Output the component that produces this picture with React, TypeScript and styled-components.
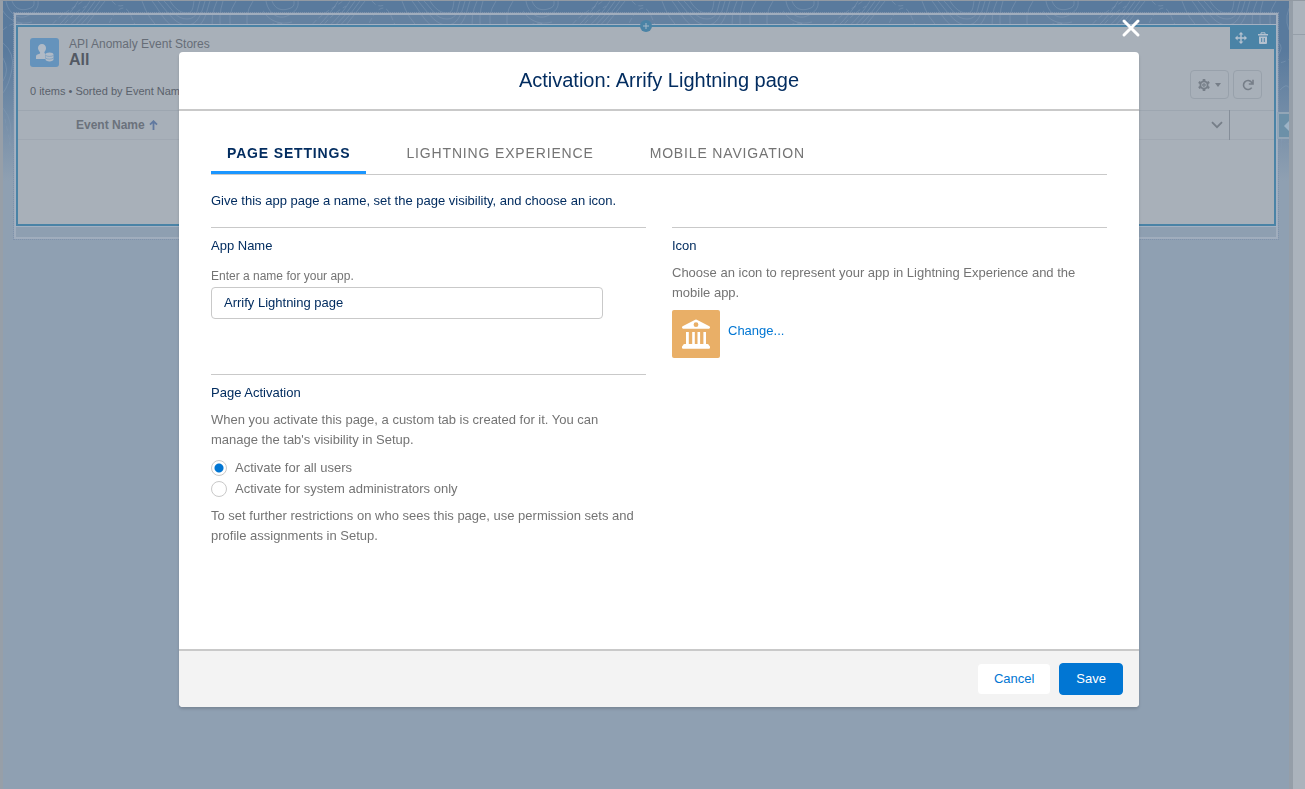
import React, { useState } from "react";
import styled, { createGlobalStyle } from "styled-components";

const GlobalStyle = createGlobalStyle`
  *, *::before, *::after { box-sizing: border-box; }
  body {
    margin: 0;
    font-family: "Liberation Sans", Arial, sans-serif;
    font-size: 13px;
    line-height: 20px;
    color: #032d60;
  }
  button, input { font: inherit; }
  h1, h2, p, fieldset { margin: 0; padding: 0; border: 0; font-weight: 400; }
`;

/* ---------- Page builder behind the dialog ---------- */

const Builder = styled.div`
  display: flex;
  min-height: 100vh;
  border-top: 1px solid #929aa3;
  border-left: 3px solid #979fa8;
`;

const Canvas = styled.main`
  position: relative;
  flex: 1;
  min-width: 0;
  padding: 11px 10px;
  background: linear-gradient(#597a9d 0, #597a9d 50px, #8fa0b2 180px);
`;

const Topography = styled.svg`
  position: absolute;
  top: 0;
  left: 0;
  width: 100%;
  height: 180px;
  fill: none;
  stroke: #8da3bb;
  stroke-opacity: 0.4;
`;

const SidePanel = styled.aside`
  width: 16px;
  border-left: 4px solid #959ea8;
  background: #abb3bc;
`;

const SidePanelTop = styled.div`
  height: 34px;
  border-bottom: 1px solid #969fa9;
`;

const Region = styled.div`
  position: relative;
  border: 1px dotted #7f92ac;
  background: rgba(139, 154, 177, 0.25);
`;

const RegionInner = styled.div`
  border: 2px solid #a0adbd;
  padding: 10px 0 11px;
`;

const ListCard = styled.section`
  position: relative;
  min-height: 201px;
  border: 2px solid #4a83a6;
  outline: 1px solid #a4b1c2;
  background: #a8b0b9;
  color: #666d77;
  font-size: 11px;
  line-height: 16px;
`;

const AddBadge = styled.button`
  position: absolute;
  top: -7px;
  left: 50%;
  width: 12px;
  height: 12px;
  margin-left: -6px;
  padding: 0;
  border: 0;
  border-radius: 50%;
  background: #4a83a6;
`;

const CardTools = styled.div`
  position: absolute;
  top: 0;
  right: 0;
  display: flex;
  align-items: center;
  height: 22px;
  background: #4a83a6;
`;

const ToolButton = styled.button`
  display: flex;
  justify-content: center;
  align-items: center;
  width: 22px;
  height: 20px;
  padding: 0;
  border: 0;
  background: none;
`;

const CardHeader = styled.header`
  display: flex;
  align-items: center;
  gap: 10px;
  padding: 10px 12px 0;
`;

const CardTitles = styled.div`
  line-height: 15px;
`;

const CardKind = styled.p`
  font-size: 12px;
`;

const CardName = styled.h2`
  color: #535963;
  font-size: 16px;
  font-weight: 700;
`;

const CardStatus = styled.div`
  display: flex;
  justify-content: space-between;
  align-items: center;
  height: 43px;
  padding: 0 12px;
`;

const StatusText = styled.p`
  padding-top: 4px;
  color: #5a616b;
`;

const ListActions = styled.div`
  display: flex;
  gap: 4px;
  padding-bottom: 8px;
`;

const ListButton = styled.button<{ $wide?: boolean }>`
  display: flex;
  justify-content: center;
  align-items: center;
  gap: 5px;
  width: ${(p) => (p.$wide ? 39 : 29)}px;
  height: 29px;
  padding: 0;
  border: 1px solid #98a1ab;
  border-radius: 4px;
  background: none;
`;

const ListTable = styled.table`
  width: 100%;
  border-collapse: collapse;
  border-top: 1px solid #9da6b0;
  border-bottom: 1px solid #a0a8b2;
`;

const HeaderCell = styled.th<{ $width?: number }>`
  width: ${(p) => (p.$width ? `${p.$width}px` : "auto")};
  height: 29px;
  padding: 0 6px 0 0;
  border-right: ${(p) => (p.$width ? "0" : "1px solid #858e99")};
  color: #6b727c;
  font-size: 12px;
  text-align: left;
`;

const HeaderContent = styled.div`
  display: flex;
  align-items: center;
  gap: 4px;
  padding-left: 58px;

  svg:last-child { margin-left: auto; }
`;

const PanelHandle = styled.button`
  position: absolute;
  top: 111px;
  right: 0;
  display: flex;
  align-items: center;
  justify-content: flex-end;
  width: 12px;
  height: 27px;
  padding: 0;
  border: 2px solid #93a6b7;
  border-right: 0;
  background: #6c90a8;
`;

/* ---------- Dialog ---------- */

const Overlay = styled.div`
  position: fixed;
  inset: 0;
  display: flex;
  justify-content: center;
  padding: 52px 0 82px 13px;
`;

const Dialog = styled.div`
  position: relative;
  display: flex;
  flex-direction: column;
  width: 100%;
  max-width: 960px;
  border-radius: 4px;
  background: #fff;
  box-shadow: 0 2px 3px rgba(0, 0, 0, 0.16);
`;

const CloseButton = styled.button`
  position: absolute;
  top: -34px;
  right: -2px;
  width: 20px;
  height: 20px;
  padding: 0;
  border: 0;
  background: none;

  svg { display: block; }
`;

const DialogHeader = styled.header`
  padding: 16px;
  border-bottom: 2px solid #c9c9c9;
  text-align: center;
`;

const DialogTitle = styled.h1`
  font-size: 20px;
  line-height: 25px;
`;

const DialogBody = styled.div`
  flex: 1;
  min-height: 0;
  overflow: auto;
  padding: 21px 32px;
`;

const TabList = styled.div`
  display: flex;
  gap: 24px;
  border-bottom: 1px solid #c9c9c9;
`;

const Tab = styled.button<{ $active: boolean }>`
  height: 42px;
  padding: 2px 16px 0;
  border: 0;
  border-bottom: 3px solid ${(p) => (p.$active ? "#1b96ff" : "transparent")};
  background: none;
  color: ${(p) => (p.$active ? "#032d60" : "#747474")};
  font-size: 14px;
  font-weight: ${(p) => (p.$active ? 700 : 400)};
  letter-spacing: 0.06em;
  text-transform: uppercase;
`;

const Intro = styled.p`
  padding: 16px 0;
`;

const Columns = styled.div`
  display: grid;
  grid-template-columns: 1fr 1fr;
  gap: 0 26px;
`;

const Section = styled.section<{ $tall?: boolean }>`
  min-height: ${(p) => (p.$tall ? 147 : 0)}px;
  padding-top: 8px;
  border-top: 1px solid #c9c9c9;
`;

const SectionTitle = styled.h2`
  margin-bottom: 7px;
  font-size: 13px;
`;

const Hint = styled.p`
  color: #747474;
`;

const FieldLabel = styled.label`
  display: block;
  padding: 3px 0 1px;
  color: #747474;
  font-size: 12px;
`;

const TextField = styled.input`
  display: block;
  width: 90%;
  height: 32px;
  padding: 0 12px 2px;
  border: 1px solid #c9c9c9;
  border-radius: 4px;
  background: #fff;
  color: #032d60;
`;

const Choices = styled.fieldset`
  display: grid;
  gap: 1px;
  margin: 8px 0 7px;
`;

const Choice = styled.label`
  display: flex;
  align-items: center;
  gap: 8px;
  color: #747474;
`;

const Radio = styled.input`
  appearance: none;
  width: 16px;
  height: 16px;
  margin: 0;
  border: 1px solid #c9c9c9;
  border-radius: 50%;
  background: #fff;

  &:checked { background: radial-gradient(circle, #0176d3 4px, #fff 5px); }
`;

const IconPicker = styled.div`
  display: flex;
  gap: 8px;
  padding-top: 7px;
`;

const ChangeLink = styled.a`
  padding-top: 11px;
  color: #0176d3;
  text-decoration: none;
`;

const DialogFooter = styled.footer`
  display: flex;
  justify-content: flex-end;
  align-items: center;
  gap: 8px;
  padding: 12px 16px;
  border-top: 2px solid #c9c9c9;
  border-radius: 0 0 4px 4px;
  background: #f3f3f3;
`;

const FooterButton = styled.button<{ $primary?: boolean }>`
  height: 32px;
  padding: 0 16px;
  border: 1px solid ${(p) => (p.$primary ? "#0176d3" : "#f3f3f3")};
  border-radius: 4px;
  background: ${(p) => (p.$primary ? "#0176d3" : "#fff")};
  color: ${(p) => (p.$primary ? "#fff" : "#0176d3")};
`;

/* ---------- Drawings ---------- */

const ContourLines = () => (
  <Topography aria-hidden="true">
    <defs>
      <linearGradient id="fade" x1="0" y1="0" x2="0" y2="1">
        <stop offset="0.5" stopColor="#fff" />
        <stop offset="1" stopColor="#000" />
      </linearGradient>
      <mask id="fadeMask">
        <rect width="100%" height="100%" fill="url(#fade)" />
      </mask>
      <pattern id="contours" width="260" height="180" patternUnits="userSpaceOnUse">
        <path d="M3 0C5 12 15 19 24 15S36 6 35 0M9 0C12 8 18 10 25 8S31 3 31 0M-3 5C3 17 13 25 29 21" />
        <path strokeDasharray="5 3" d="M0 29C10 19 24 21 30 29M45 29C54 15 69 8 80 0M57 29Q66 15 83 5M103 29Q110 12 117 8T129 17 138 29M109 0Q115 8 123 3" />
        <path d="M51 29Q68 13 75 0M62 29Q78 15 87 0M68 29Q83 15 92 0M73 29Q87 15 97 0M79 29Q92 13 102 0" />
        <path d="M149 0C158 11 164 29 183 29S203 11 207 0M155 0C164 10 172 24 184 24S199 10 202 0M161 0C170 9 173 18 184 18S194 8 197 0M167 0C173 9 178 12 184 12S190 6 191 0M139 0Q145 18 158 29" />
        <path d="M214 0Q207 15 210 29M220 0Q215 15 218 29M233 0Q223 15 229 29M246 29Q240 15 250 0" />
        <path d="M0 42Q12 52 9 68T0 92M0 57Q7 69 0 80M0 107Q12 121 6 145M231 39Q241 43 237 51T228 55M237 89Q250 75 247 107T252 145M225 112Q242 121 238 148" />
        <path strokeDasharray="5 3" d="M222 60Q242 67 255 50M223 132Q235 135 258 151M2 118Q5 134 11 158" />
      </pattern>
    </defs>
    <rect width="100%" height="180" fill="url(#contours)" stroke="none" mask="url(#fadeMask)" />
  </Topography>
);

const EventStoreIcon = () => (
  <svg width="29" height="29" viewBox="0 0 29 29" aria-hidden="true">
    <rect width="29" height="29" rx="3" fill="#6593bc" />
    <path fill="#b0bac6" d="M12 6c2.400 0 4 1.800 4 4 0 1.700-.7 2.700-1.500 4-.4 1 .2 1.500 1.300 2-.8 1.200-.8 3.500-.2 5H6v-2.500c0-1 .6-1.500 1.500-1.900l2-.9c.8-.5.800-1 .3-1.800C8.800 12.500 8 11.500 8 10c0-2.200 1.500-4 4-4z" />
    <path fill="#b0bac6" d="M19.500 14.500c2.300 0 4 .8 4 1.900v5.200c0 1.100-1.700 1.900-4 1.900s-4-.8-4-1.900v-5.200c0-1.100 1.700-1.900 4-1.900z" />
    <path fill="none" stroke="#6593bc" strokeWidth=".6" d="M15.500 17.300c1.500 1.500 6.500 1.500 8 0M15.500 20c1.500 1.500 6.500 1.500 8 0" />
  </svg>
);

const MoveIcon = () => (
  <svg width="12" height="12" viewBox="0 0 12 12" fill="#b4c1cf" aria-hidden="true">
    <path d="M6 0l2.400 2.600H6.700v2.700h2.700V3.600L12 6 9.400 8.400V6.700H6.700v2.700h1.700L6 12 3.600 9.400h1.700V6.700H2.600v1.700L0 6l2.600-2.400v1.700h2.700V2.600H3.600z" />
  </svg>
);

const TrashIcon = () => (
  <svg width="10" height="12" viewBox="0 0 10 12" aria-hidden="true">
    <path fill="none" stroke="#b4c1cf" d="M3 2.500V.8h4v1.700" />
    <path fill="#b4c1cf" d="M0 2h10v1.500H0zM1 4.500h8V11q0 1-1 1H2q-1 0-1-1z" />
    <path stroke="#4a83a6" d="M3.700 6v4M6.300 6v4" />
  </svg>
);

const GearIcon = () => (
  <svg width="12" height="12" viewBox="0 0 12 12" fill="none" stroke="#767e88" aria-hidden="true">
    <circle cx="6" cy="6" r="3.600" strokeWidth="1.800" />
    <circle cx="6" cy="6" r="1.200" strokeWidth="1.200" />
    <path strokeWidth="2.600" d="M6 0v2M6 10v2M.8 3l1.700 1M9.500 8l1.700 1M.8 9l1.700-1M9.500 4l1.700-1" />
  </svg>
);

const RefreshIcon = () => (
  <svg width="12" height="12" viewBox="0 0 12 12" fill="none" stroke="#767e88" strokeWidth="1.600" aria-hidden="true">
    <path d="M9.700 8.600A4.500 4.500 0 1 1 9.500 3.200L10.800 4.600M11 .8v4.200H6.800" />
  </svg>
);

const BankIcon = () => (
  <svg width="48" height="48" viewBox="0 0 48 48" aria-hidden="true">
    <rect width="48" height="48" rx="2" fill="#e9af67" />
    <path
      fill="#fff"
      fillRule="evenodd"
      d="M23.200 9.800q.8-.4 1.600 0l12.600 6.400q.6.400.6 1v.4q0 1.100-1.100 1.100H11.100Q10 18.700 10 17.600v-.4q0-.6.6-1zM24 12.300a2.400 2.400 0 1 0 0 4.800 2.400 2.400 0 0 0 0-4.800z"
    />
    <path fill="#fff" d="M14 22h2.800v12h3.400V22h2.600v12h2.700V22h2.600v12h3.300V22H34v12h1.500q1.500 0 1.500 1.500 1 .4 1 1.500v.7q0 1.100-1.100 1.100H11.100Q10 38.800 10 37.700V37q0-1.100 1-1.500 0-1.500 1.500-1.500H14z" />
  </svg>
);

const TABS = ["Page Settings", "Lightning Experience", "Mobile Navigation"];

const PageBuilder = () => (
  <Builder>
    <Canvas>
      <ContourLines />
      <Region>
        <RegionInner>
          <ListCard>
            <CardHeader>
              <EventStoreIcon />
              <CardTitles>
                <CardKind>API Anomaly Event Stores</CardKind>
                <CardName>All</CardName>
              </CardTitles>
            </CardHeader>
            <CardStatus>
              <StatusText>0 items • Sorted by Event Name</StatusText>
              <ListActions>
                <ListButton $wide aria-label="List view controls">
                  <GearIcon />
                  <svg width="6" height="4" viewBox="0 0 6 4" fill="#767e88" aria-hidden="true">
                    <path d="M0 0h6L3 4z" />
                  </svg>
                </ListButton>
                <ListButton aria-label="Refresh">
                  <RefreshIcon />
                </ListButton>
              </ListActions>
            </CardStatus>
            <ListTable>
              <thead>
                <tr>
                  <HeaderCell scope="col">
                    <HeaderContent>
                      Event Name
                      <svg width="9" height="10" viewBox="0 0 9 10" fill="none" stroke="#6179a0" strokeWidth="1.800" aria-hidden="true">
                        <path d="M4.500 10V1M1 4.700l3.500-3.500L8 4.700" />
                      </svg>
                      <svg width="12" height="8" viewBox="0 0 12 8" fill="none" stroke="#767e88" strokeWidth="1.800" aria-hidden="true">
                        <path d="M1 1.200l5 5 5-5" />
                      </svg>
                    </HeaderContent>
                  </HeaderCell>
                  <HeaderCell as="td" $width={45} />
                </tr>
              </thead>
            </ListTable>
            <CardTools>
              <ToolButton aria-label="Move"><MoveIcon /></ToolButton>
              <ToolButton aria-label="Delete"><TrashIcon /></ToolButton>
            </CardTools>
            <AddBadge aria-label="Add component">
              <svg width="12" height="12" viewBox="0 0 12 12" stroke="#a4b7c8" display="block" aria-hidden="true">
                <path d="M6 3v6M3 6h6" />
              </svg>
            </AddBadge>
          </ListCard>
        </RegionInner>
      </Region>
      <PanelHandle aria-label="Collapse panel">
        <svg width="5" height="10" viewBox="0 0 5 10" fill="#9db3c6" aria-hidden="true">
          <path d="M5 0v10L0 5z" />
        </svg>
      </PanelHandle>
    </Canvas>
    <SidePanel><SidePanelTop /></SidePanel>
  </Builder>
);

export default function App() {
  const [tab, setTab] = useState(TABS[0]);
  const [name, setName] = useState("Arrify Lightning page");
  const [audience, setAudience] = useState("all");

  return (
    <>
      <GlobalStyle />
      <PageBuilder />
      <Overlay>
        <Dialog role="dialog" aria-modal="true" aria-labelledby="dialog-title">
          <CloseButton aria-label="Close">
            <svg width="20" height="20" viewBox="0 0 20 20" stroke="#fff" strokeWidth="3" strokeLinecap="round" aria-hidden="true">
              <path d="M3 3l14 14M17 3L3 17" />
            </svg>
          </CloseButton>
          <DialogHeader>
            <DialogTitle id="dialog-title">Activation: Arrify Lightning page</DialogTitle>
          </DialogHeader>
          <DialogBody>
            <TabList role="tablist">
              {TABS.map((t) => (
                <Tab key={t} role="tab" aria-selected={t === tab} $active={t === tab} onClick={() => setTab(t)}>
                  {t}
                </Tab>
              ))}
            </TabList>
            <Intro>Give this app page a name, set the page visibility, and choose an icon.</Intro>
            <Columns>
              <Section $tall>
                <SectionTitle>App Name</SectionTitle>
                <FieldLabel htmlFor="app-name">Enter a name for your app.</FieldLabel>
                <TextField id="app-name" value={name} onChange={(e) => setName(e.target.value)} />
              </Section>
              <Section>
                <SectionTitle>Icon</SectionTitle>
                <Hint>Choose an icon to represent your app in Lightning Experience and the mobile app.</Hint>
                <IconPicker>
                  <BankIcon />
                  <ChangeLink href="#icon">Change...</ChangeLink>
                </IconPicker>
              </Section>
              <Section>
                <SectionTitle>Page Activation</SectionTitle>
                <Hint>When you activate this page, a custom tab is created for it. You can manage the tab's visibility in Setup.</Hint>
                <Choices>
                  <Choice>
                    <Radio type="radio" name="audience" checked={audience === "all"} onChange={() => setAudience("all")} />
                    Activate for all users
                  </Choice>
                  <Choice>
                    <Radio type="radio" name="audience" checked={audience === "admins"} onChange={() => setAudience("admins")} />
                    Activate for system administrators only
                  </Choice>
                </Choices>
                <Hint>To set further restrictions on who sees this page, use permission sets and profile assignments in Setup.</Hint>
              </Section>
            </Columns>
          </DialogBody>
          <DialogFooter>
            <FooterButton>Cancel</FooterButton>
            <FooterButton $primary>Save</FooterButton>
          </DialogFooter>
        </Dialog>
      </Overlay>
    </>
  );
}
